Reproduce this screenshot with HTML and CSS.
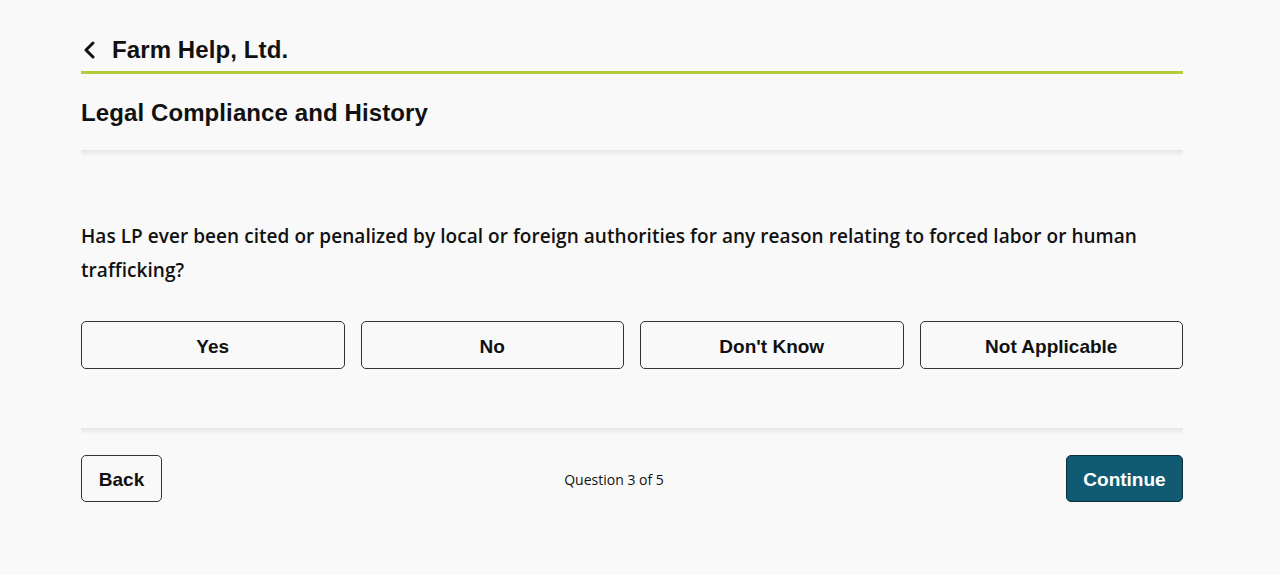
FILE: index.html
```html
<!DOCTYPE html>
<html lang="en">
<head>
<meta charset="utf-8">
<title>Farm Help, Ltd.</title>
<link rel="stylesheet" href="styles.css">
</head>
<body>
<div class="page">
  <header class="top">
    <a class="back-link" href="#">
      <svg class="chev" width="14" height="18" viewBox="0 0 14 18" aria-hidden="true"><path d="M11 2 L4 9 L11 16" fill="none" stroke="#111" stroke-width="3" stroke-linecap="round" stroke-linejoin="round"/></svg>
      <span class="org">Farm Help, Ltd.</span>
    </a>
  </header>
  <h1 class="section-title">Legal Compliance and History</h1>
  <div class="divider"></div>
  <p class="question">Has LP ever been cited or penalized by local or foreign authorities for any reason relating to forced labor or human trafficking?</p>
  <div class="options">
    <button class="opt">Yes</button>
    <button class="opt">No</button>
    <button class="opt">Don't Know</button>
    <button class="opt">Not Applicable</button>
  </div>
  <div class="divider divider-bottom"></div>
  <footer class="nav">
    <button class="btn btn-back">Back</button>
    <span class="progress">Question 3 of 5</span>
    <button class="btn btn-continue">Continue</button>
  </footer>
</div>
</body>
</html>
```
FILE: styles.css
```css
html, body {
  margin: 0;
  padding: 0;
  background: #f9f9f9;
  height: 100%;
}
body {
  font-family: "Liberation Sans", Arial, sans-serif;
  color: #111;
}
.page {
  width: 1102px;
  margin-left: 81px;
  padding-top: 34px;
}
.top {
  border-bottom: 3px solid #b5cb3b;
  height: 37px;
}
.back-link {
  display: flex;
  align-items: center;
  gap: 16px;
  text-decoration: none;
  color: #111;
  height: 32px;
}
.chev {
  display: block;
  margin-left: 1px;
}
.org {
  font-size: 24px;
  font-weight: 700;
  letter-spacing: 0.1px;
}
.section-title {
  margin: 24px 0 0;
  font-size: 24px;
  line-height: 30px;
  font-weight: 700;
  letter-spacing: 0.1px;
}
.divider {
  margin-top: 22px;
  height: 7px;
  background: linear-gradient(#e6e6e6, #f9f9f9);
}
.question {
  font-family: "Open Sans", "Noto Sans", sans-serif;
  font-weight: 600;
  font-size: 19px;
  line-height: 34px;
  margin: 62px 0 0;
  letter-spacing: 0.05px;
}
.options {
  display: grid;
  grid-template-columns: repeat(4, 1fr);
  gap: 16px;
  margin-top: 34px;
}
.opt {
  height: 48px;
  background: #f9f9f9;
  border: 1px solid #333;
  border-radius: 5px;
  font-family: "Liberation Sans", Arial, sans-serif;
  font-weight: 700;
  font-size: 19px;
  color: #111;
  padding: 3px 0 0;
}
.divider-bottom {
  margin-top: 59px;
}
.nav {
  display: flex;
  align-items: center;
  justify-content: space-between;
  margin-top: 20px;
}
.btn {
  height: 47px;
  border-radius: 5px;
  font-family: "Liberation Sans", Arial, sans-serif;
  font-weight: 700;
  font-size: 19px;
  padding: 2px 16px 0;
}
.btn-back {
  width: 81px;
  background: #f9f9f9;
  border: 1px solid #333;
  color: #111;
}
.btn-continue {
  width: 117px;
  background: #105b73;
  border: 1px solid #0b2f3b;
  color: #fff;
}
.progress {
  font-family: "Open Sans", "Noto Sans", sans-serif;
  font-size: 14px;
  color: #111;
  padding-top: 2px;
}
```
